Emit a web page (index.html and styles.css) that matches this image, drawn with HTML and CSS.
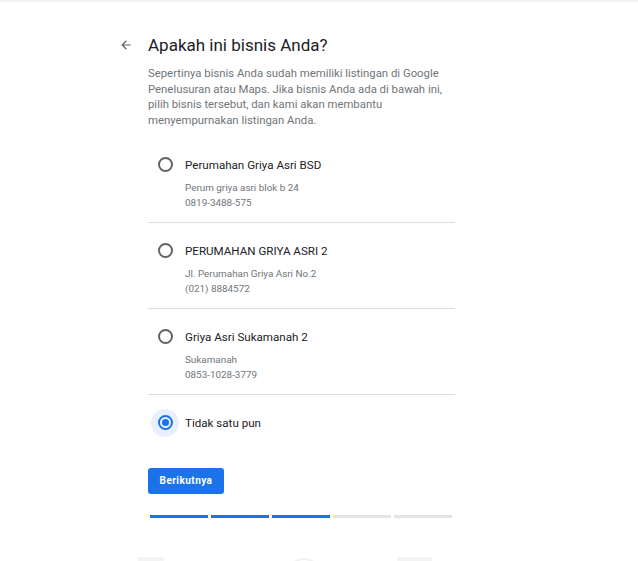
FILE: index.html
```html
<!DOCTYPE html>
<html lang="id">
<head>
    <meta charset="UTF-8">
    <meta name="viewport" content="width=device-width, initial-scale=1.0">
    <title>Apakah ini bisnis Anda?</title>
    <link rel="stylesheet" href="styles.css">
</head>
<body>

    <div class="topbar"></div>

    <div class="page">
        <div class="head">
            <span class="back">
                <svg width="14" height="14" viewBox="0 0 24 24"><path d="M20 11H7.83l5.59-5.59L12 4l-8 8 8 8 1.41-1.41L7.83 13H20v-2z" fill="#5f6368"/></svg>
            </span>
            <h2>Apakah ini bisnis Anda?</h2>
        </div>

        <div class="content">
            <p class="intro">Sepertinya bisnis Anda sudah memiliki listingan di Google Penelusuran atau Maps. Jika bisnis Anda ada di bawah ini, pilih bisnis tersebut, dan kami akan membantu menyempurnakan listingan Anda.</p>

            <div class="options">
                <div class="option">
                    <div class="row">
                        <span class="radio"><span class="dot"></span></span>
                        <span class="label">Perumahan Griya Asri BSD</span>
                    </div>
                    <div class="sub">Perum griya asri blok b 24<br>0819-3488-575</div>
                </div>

                <div class="option">
                    <div class="row">
                        <span class="radio"><span class="dot"></span></span>
                        <span class="label">PERUMAHAN GRIYA ASRI 2</span>
                    </div>
                    <div class="sub">Jl. Perumahan Griya Asri No.2<br>(021) 8884572</div>
                </div>

                <div class="option">
                    <div class="row">
                        <span class="radio"><span class="dot"></span></span>
                        <span class="label">Griya Asri Sukamanah 2</span>
                    </div>
                    <div class="sub">Sukamanah<br>0853-1028-3779</div>
                </div>

                <div class="option last">
                    <div class="row">
                        <span class="radio checked"><span class="dot"></span></span>
                        <span class="label">Tidak satu pun</span>
                    </div>
                </div>
            </div>

            <button class="next-btn">Berikutnya</button>

            <div class="progress">
                <span class="step done"></span>
                <span class="step done"></span>
                <span class="step done"></span>
                <span class="step"></span>
                <span class="step"></span>
            </div>

            <div class="footer">
                <span class="ghost-box"></span>
                <span class="ghost-ring"></span>
                <span class="ghost-box wide"></span>
            </div>
        </div>
    </div>

</body>
</html>
```

FILE: styles.css
```css
body {
    font-family: Roboto, Arial, sans-serif;
    margin: 0;
    padding: 0;
    background-color: #ffffff;
    color: #202124;
    overflow: hidden;
}

.topbar {
    height: 1px;
    background-color: #f1f1f1;
    box-shadow: 0px 1px 2px rgba(0, 0, 0, 0.06);
}

.page {
    padding-left: 112px;
    padding-top: 30px;
}

.head {
    display: flex;
    align-items: center;
    height: 28px;
}

.back {
    width: 36px;
    display: flex;
    align-items: center;
    padding-left: 7px;
    box-sizing: border-box;
}

h2 {
    font-size: 17px;
    font-weight: 400;
    margin: 0;
    color: #202124;
}

.content {
    padding-left: 36px;
    width: 307px;
}

.intro {
    font-size: 11.35px;
    line-height: 15.7px;
    color: #70757a;
    margin: 7px 0 0 0;
    width: 300px;
}

.options {
    margin-top: 8px;
}

.option {
    padding: 14px 0 12px 3px;
    border-bottom: 1px solid #dadce0;
}

.option.last {
    border-bottom: none;
    padding-bottom: 0;
}

.row {
    display: flex;
    align-items: center;
    gap: 6px;
    height: 28px;
}

.radio {
    width: 28px;
    height: 28px;
    border-radius: 50%;
    display: flex;
    align-items: center;
    justify-content: center;
}

.radio::before {
    content: "";
    width: 11px;
    height: 11px;
    border: 2px solid #5f6368;
    border-radius: 50%;
}

.radio .dot {
    display: none;
}

.radio.checked {
    background-color: #e8f0fe;
    position: relative;
}

.radio.checked::before {
    border-color: #1a73e8;
}

.radio.checked .dot {
    display: block;
    position: absolute;
    width: 7px;
    height: 7px;
    border-radius: 50%;
    background-color: #1a73e8;
}

.label {
    font-size: 11.6px;
    color: #202124;
}

.sub {
    font-size: 9.9px;
    line-height: 15px;
    color: #70757a;
    margin-top: 1px;
    padding-left: 34px;
}

.next-btn {
    display: block;
    margin-top: 31px;
    background-color: #1a73e8;
    color: white;
    border: none;
    border-radius: 3px;
    height: 26px;
    width: 76px;
    font-family: Roboto, Arial, sans-serif;
    font-size: 10px;
    font-weight: 700;
    letter-spacing: 0.45px;
    padding: 0;
    cursor: pointer;
}

.progress {
    display: flex;
    gap: 3px;
    margin-top: 21px;
    margin-left: 2px;
}

.step {
    width: 58px;
    height: 3px;
    background-color: #e3e4e6;
}

.step.done {
    background-color: #1a73e8;
}

.footer {
    height: 43px;
    overflow: hidden;
    display: flex;
    align-items: flex-start;
    padding-top: 39px;
    box-sizing: border-box;
    margin-left: -10px;
    width: 330px;
}

.ghost-box {
    width: 26px;
    height: 4px;
    flex-shrink: 0;
    background-color: #f4f4f5;
}

.ghost-box.wide {
    width: 35px;
    margin-left: 76px;
}

.ghost-ring {
    width: 30px;
    height: 30px;
    flex-shrink: 0;
    border: 2px solid #f0f0f0;
    border-radius: 50%;
    margin-left: 123px;
    margin-top: 1px;
}
```
